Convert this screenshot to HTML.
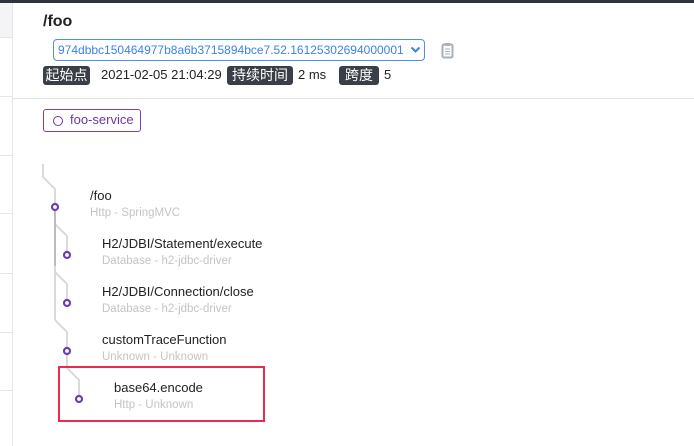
<!DOCTYPE html>
<html><head><meta charset="utf-8"><style>
body{margin:0;width:694px;height:446px;overflow:hidden;background:#fff;font-family:"Liberation Sans","Noto Sans CJK SC",sans-serif;position:relative}
.a{position:absolute}
.tag{position:absolute;background:#3a3f47;color:#fff;font-size:14px;height:19px;line-height:19px;text-align:center;border-radius:3px;box-sizing:border-box}
.t{position:absolute;font-size:13px;color:#222}
.s{position:absolute;font-size:11.5px;color:#c4c4c4}
</style></head><body>
<div class="a" style="left:0;top:0;width:694px;height:3px;background:#2e333d"></div>
<div class="a" style="left:0;top:3px;width:12px;height:34px;background:#f4f4f6"></div>
<div class="a" style="left:12px;top:3px;width:1px;height:443px;background:#e6e6e6"></div>
<div class="a" style="left:0;top:37px;width:12px;height:1px;background:#e6e6e6"></div>
<div class="a" style="left:0;top:96px;width:12px;height:1px;background:#e6e6e6"></div>
<div class="a" style="left:0;top:155px;width:12px;height:1px;background:#e6e6e6"></div>
<div class="a" style="left:0;top:213px;width:12px;height:1px;background:#e6e6e6"></div>
<div class="a" style="left:0;top:273px;width:12px;height:1px;background:#e6e6e6"></div>
<div class="a" style="left:0;top:332px;width:12px;height:1px;background:#e6e6e6"></div>
<div class="a" style="left:0;top:390px;width:12px;height:1px;background:#e6e6e6"></div>
<div class="a" style="left:13px;top:98px;width:681px;height:1px;background:#e4e4e4"></div>
<div class="a" style="left:43px;top:13px;font-size:16px;font-weight:bold;color:#222">/foo</div>
<div class="a" style="left:53px;top:39px;width:372px;height:22px;border:1px solid #4d8ef0;border-radius:4px;box-sizing:border-box;color:#3d82e8;font-size:12px;line-height:20px;padding-left:4px;white-space:nowrap;overflow:hidden">974dbbc150464977b8a6b3715894bce7.52.16125302694000001</div>
<div class="a" style="left:403px;top:41px;width:20px;height:18px;background:#fff"></div>
<svg class="a" style="left:410px;top:45px" width="11" height="9"><path d="M1.5 2.5 L5.5 6.5 L9.5 2.5" fill="none" stroke="#3d82e8" stroke-width="2"/></svg>
<svg class="a" style="left:441px;top:42px" width="14" height="17"><rect x="1.5" y="2.5" width="10" height="13" rx="1.5" fill="none" stroke="#aab0ba" stroke-width="2"/><rect x="4" y="1" width="5" height="3" fill="#aab0ba"/><path d="M4 7h5M4 9.5h5M4 12h5" stroke="#aab0ba" stroke-width="1"/></svg>
<div class="tag" style="left:43px;top:66px;width:47px">起始点</div>
<div class="t" style="left:101px;top:67px">2021-02-05 21:04:29</div>
<div class="tag" style="left:227px;top:66px;width:66px">持续时间</div>
<div class="t" style="left:298px;top:67px">2 ms</div>
<div class="tag" style="left:339px;top:66px;width:40px">跨度</div>
<div class="t" style="left:384px;top:67px">5</div>
<div class="a" style="left:43px;top:109px;width:98px;height:23px;border:1px solid #7b3fb6;border-radius:3px;box-sizing:border-box"></div>
<div class="a" style="left:53px;top:116px;width:8px;height:8px;border:1.5px solid #6a37a8;border-radius:50%"></div>
<div class="a" style="left:70px;top:112px;font-size:13px;color:#6a37a8">foo-service</div>
<svg class="a" style="left:0;top:0" width="300" height="446">
<g fill="none" stroke="#dadada" stroke-width="2">
<path d="M43 164 V177 L55 189 V207"/>
<path d="M55 207 V320"/>
<path d="M55 224 L67 236 V255"/>
<path d="M55 272 L67 284 V303"/>
<path d="M55 320 L67 332 V351 V368 L79 380 V399"/>
</g>
<path d="M55 207 V266" stroke="#bcbcbc" stroke-width="2"/>
<g fill="#fff" stroke="#6b3fb0" stroke-width="2.2">
<circle cx="55" cy="207" r="3"/><circle cx="67" cy="255" r="3"/><circle cx="67" cy="303" r="3"/><circle cx="67" cy="351" r="3"/><circle cx="79" cy="399" r="3"/>
</g>
<rect x="59" y="367" width="205" height="54" fill="none" stroke="#ea2a4e" stroke-width="2"/>
</svg>
<div class="t" style="left:90px;top:188px">/foo</div><div class="s" style="left:90px;top:207px">Http - SpringMVC</div>
<div class="t" style="left:102px;top:236px">H2/JDBI/Statement/execute</div><div class="s" style="left:102px;top:255px">Database - h2-jdbc-driver</div>
<div class="t" style="left:102px;top:284px">H2/JDBI/Connection/close</div><div class="s" style="left:102px;top:303px">Database - h2-jdbc-driver</div>
<div class="t" style="left:102px;top:332px">customTraceFunction</div><div class="s" style="left:102px;top:351px">Unknown - Unknown</div>
<div class="t" style="left:114px;top:380px">base64.encode</div><div class="s" style="left:114px;top:399px">Http - Unknown</div>
</body></html>
